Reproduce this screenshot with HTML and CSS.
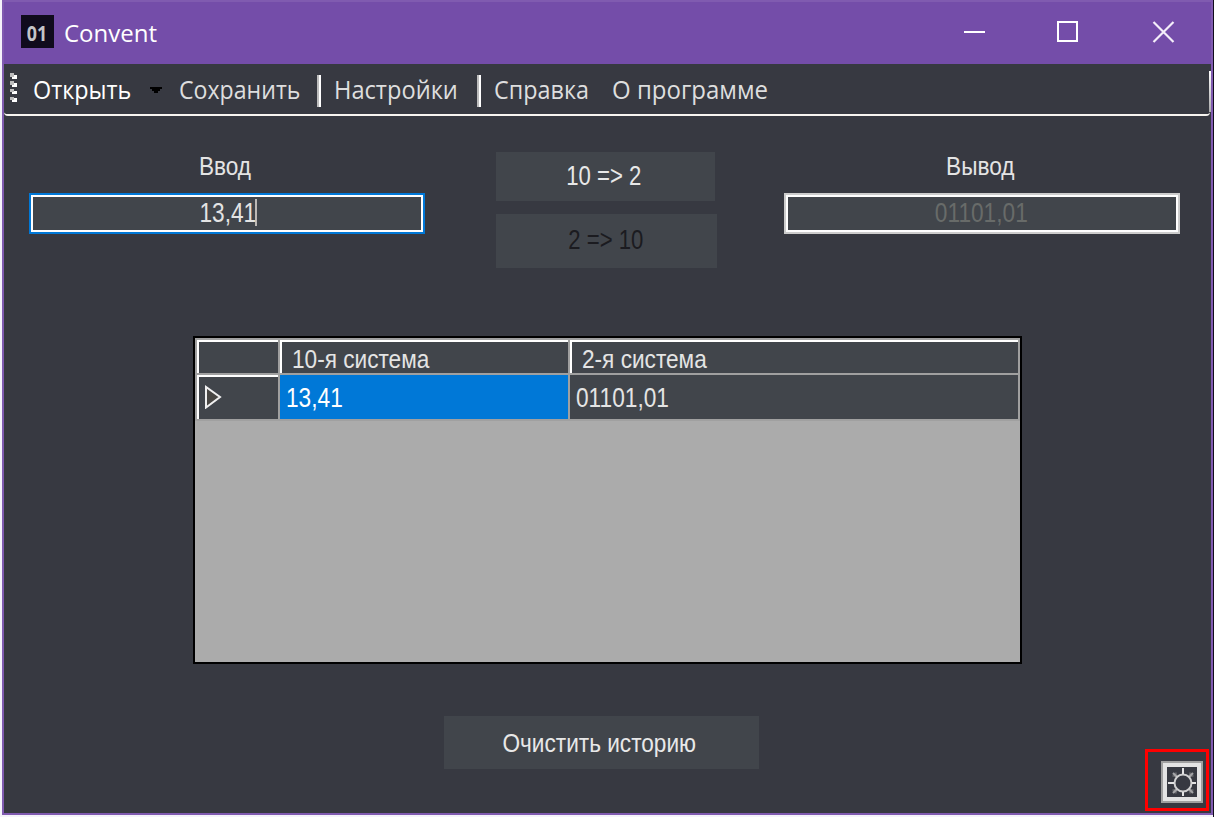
FILE: index.html
```html
<!DOCTYPE html>
<html lang="ru">
<head>
<meta charset="utf-8">
<title>Convent</title>
<link rel="stylesheet" href="styles.css">
</head>
<body>
<div class="window">
  <header class="titlebar">
    <span class="app-icon"><span class="app-icon-text">01</span></span>
    <span class="app-title"><span class="fit fit-title">Convent</span></span>
    <svg class="controls" width="190" height="24" viewBox="0 0 190 24" shape-rendering="crispEdges">
      <path d="M0 10h21v2H0z" fill="#fff"/>
      <path d="M94 1h19v19h-19z" fill="none" stroke="#fff" stroke-width="2"/>
      <path d="M189.500 1l20 20M209.500 1l-20 20" stroke="#f4eefa" stroke-width="2.200" shape-rendering="auto"/>
    </svg>
  </header>
  <nav class="toolbar">
    <svg class="grip" width="8" height="34" viewBox="0 0 8 34" shape-rendering="crispEdges">
      <path d="M2 2h5v4H2zM2 10h5v4H2zM2 18h5v3H2zM2 25h5v4H2z" fill="#fff"/>
      <path d="M0 0h4v4H0zM0 8h4v4H0zM0 16h4v3H0zM0 24h4v3H0z" fill="#bdbdbd"/>
    </svg>
    <span class="item open"><span class="fit fit-open">Открыть</span></span>
    <svg class="arrow" width="12" height="6" viewBox="0 0 12 6" shape-rendering="crispEdges"><path d="M0 0h12v2h-2v2H8v2H4V4H2V2H0z"/></svg>
    <span class="item save"><span class="fit fit-save">Сохранить</span></span>
    <span class="sep"></span>
    <span class="item settings"><span class="fit fit-settings">Настройки</span></span>
    <span class="sep"></span>
    <span class="item help"><span class="fit fit-help">Справка</span></span>
    <span class="item about"><span class="fit fit-about">О программе</span></span>
    <span class="edge"></span>
  </nav>
  <main class="content">
    <section class="converter">
      <div class="field">
        <label class="label label-in"><span class="fit fit-in">Ввод</span></label>
        <div class="box focused"><span class="fit fit-num">13,41</span><i class="caret"></i></div>
      </div>
      <div class="actions">
        <button class="btn to-bin"><span class="fit fit-calc">10 =&gt; 2</span></button>
        <button class="btn to-dec" disabled><span class="fit fit-calc">2 =&gt; 10</span></button>
      </div>
      <div class="field">
        <label class="label label-out"><span class="fit fit-out">Вывод</span></label>
        <div class="box readonly"><span class="fit fit-num">01101,01</span></div>
      </div>
    </section>
    <section class="history">
      <div class="row head">
        <div class="cell corner"></div>
        <div class="cell"><span class="fit fit-head">10-я система</span></div>
        <div class="cell"><span class="fit fit-head">2-я система</span></div>
      </div>
      <div class="row">
        <div class="cell marker"><svg width="18" height="24" viewBox="0 0 18 24"><path d="M2 2v20.500L16 12z" fill="#484643" stroke="#f0f0f0" stroke-width="2"/></svg></div>
        <div class="cell selected"><span class="fit fit-num">13,41</span></div>
        <div class="cell"><span class="fit fit-num">01101,01</span></div>
      </div>
    </section>
    <button class="btn clear"><span class="fit fit-clear">Очистить историю</span></button>
    <div class="highlight">
      <div class="theme">
        <svg width="30" height="30" viewBox="0 0 30 30" fill="none" stroke="#e3e3e3">
          <path d="M5.500 8.500l4 1-1-4M26.500 8.500l-4 1 1-4M5.500 23.500l4-1-1 4M26.500 23.500l-4-1 1 4" stroke="#66676b" stroke-width="2"/>
          <path d="M6 6l4 4M26 6l-4 4M6 26l4-4M26 26l-4-4" stroke="#a5a5a7" stroke-width="2"/>
          <circle cx="16" cy="16" r="8.500" stroke="#d0d0d0" stroke-width="2"/>
          <path d="M16 1v6M16 25v4M1 16h6M25 16h4" stroke-width="2"/>
        </svg>
      </div>
    </div>
  </main>
</div>
</body>
</html>
```
FILE: styles.css
```css
* { box-sizing: border-box; }
html { background: #f5f3fa; }
body { margin: 0; width: 1214px; height: 817px; overflow: hidden; border-right: 1px solid #120c1c; }
.window {
  margin-left: 2px; width: 1211px; height: 815px; background: #373941;
  border: 2px solid #805bb0; display: flex; flex-direction: column;
  font-family: "Liberation Sans", Arial, sans-serif; font-size: 27px; color: #e4e4e4;
}
.fit { display: inline-block; white-space: nowrap; transform-origin: 0 50%; }

.titlebar { flex: none; height: 62px; background: #744da9; display: flex; align-items: flex-start; padding: 13px 0 0 17px; color: #fff; }
.app-icon { width: 33px; height: 33px; background: #100b1d; display: flex; align-items: center; justify-content: center; padding-top: 3px; }
.app-icon-text { font: 700 21px/21px "Open Sans", sans-serif; color: #c4c4c8; transform: scaleX(.85); }
.app-title { margin: 1px 0 0 10px; font: 24px/34px "Open Sans", sans-serif; width: 100px; }
.controls { margin: 6px 0 0 800px; overflow: visible; flex: none; }

.toolbar {
  flex: none; height: 52px; margin-right: 1px; border-bottom: 2px solid #f7f4f0;
  border-radius: 0 0 4px 4px; display: flex; align-items: flex-start;
  font: 25px/34px "Open Sans", sans-serif; color: #dedede;
}
.grip { margin: 9px 0 0 6px; }
.arrow { margin: 23px 0 0 19px; }
.item { display: block; margin-top: 8px; overflow: visible; flex: none; }
.open { width: 98px; margin-left: 15px; color: #fff; }
.save { width: 121px; margin-left: 17px; }
.settings { width: 126px; margin-left: 13px; }
.help { width: 95px; margin-left: 13px; }
.about { width: 156px; margin-left: 23px; }
.sep { width: 4px; height: 32px; margin: 11px 0 0 17px; border-left: 2px solid #bdbdbd; border-right: 2px solid #fff; }
.edge { width: 2px; height: 41px; margin: 7px -1px 0 auto; background: linear-gradient(#fff, #aaa); }

.content { flex: 1; position: relative; display: flex; flex-direction: column; align-items: center; }
.converter { width: 1151px; height: 220px; margin-right: 7px; display: flex; justify-content: space-between; }
.field { width: 396px; padding-top: 34px; display: flex; flex-direction: column; align-items: center; }
.label { height: 43px; line-height: 32px; font-size: 26px; }
.label-in { margin-right: 3px; }
.label-out { margin-right: 3px; }
.box { width: 396px; height: 41px; border: 2px solid #ccc; outline: 2px solid #fff; outline-offset: -4px; background: #41454b; display: flex; justify-content: center; line-height: 37px; }
.focused { border-color: #0078d7; padding-right: 2px; }
.caret { width: 2px; height: 27px; margin: 4px 0 0 -6px; background: #bdb9b6; }
.readonly { color: #686b69; }
.actions { width: 222px; padding-top: 36px; display: flex; flex-direction: column; gap: 13px; margin-left: 5px; }
.btn { border: 0; padding: 0; background: #41454b; color: #e8e8e8; font: inherit; display: flex; justify-content: center; }
.to-bin { width: 219px; height: 49px; line-height: 49px; padding-right: 2px; }
.to-dec { width: 221px; height: 54px; line-height: 52px; color: #1b1b20; }

.history { width: 829px; height: 328px; border: 2px solid #000; background: #ababab; }
.row { display: grid; grid-template-columns: 85px 290px 450px; height: 46px; }
.head { height: 37px; font-size: 26px; border-top: 2px solid #a0a0a0; }
.cell { background: #41454b; border-right: 2px solid #a0a0a0; border-bottom: 2px solid #a0a0a0; padding-left: 6px; line-height: 46px; overflow: hidden; }
.cell:first-child { border-left: 2px solid #a0a0a0; box-shadow: inset 2px 2px #fff; }
.head .cell { box-shadow: inset 2px 2px #fff; padding-left: 12px; line-height: 38px; }
.marker { padding: 10px 0 0 7px; line-height: 0; }
.row .selected { background: #0078d7; color: #fff; }

.clear { width: 315px; height: 53px; margin-top: 52px; margin-right: 12px; line-height: 54px; font-size: 26px; padding-right: 4px; }

/* floating theme switch pinned to the window corner */
.highlight { position: absolute; right: 2px; bottom: 2px; width: 64px; height: 62px; border: 3px solid #f00; padding: 9px 0 0 13px; }
.theme { width: 42px; height: 42px; background: #373941; border: 2px solid #a0a0a0; box-shadow: inset 0 0 0 4px #e3e3e3; padding: 4px; line-height: 0; }

.fit-num { transform: scaleX(.84); }
.fit-calc { transform: scaleX(.82); }
.box .fit, .btn .fit, .label .fit { transform-origin: 50% 50%; }
.fit-in, .fit-out, .fit-head { transform: scaleX(.87); }
.fit-clear { transform: scaleX(.87); }
.fit-open { transform: scaleX(.935); }
.fit-save { transform: scaleX(.925); }
.fit-settings { transform: scaleX(.945); }
.fit-help { transform: scaleX(.935); }
.fit-about { transform: scaleX(.96); }
```
